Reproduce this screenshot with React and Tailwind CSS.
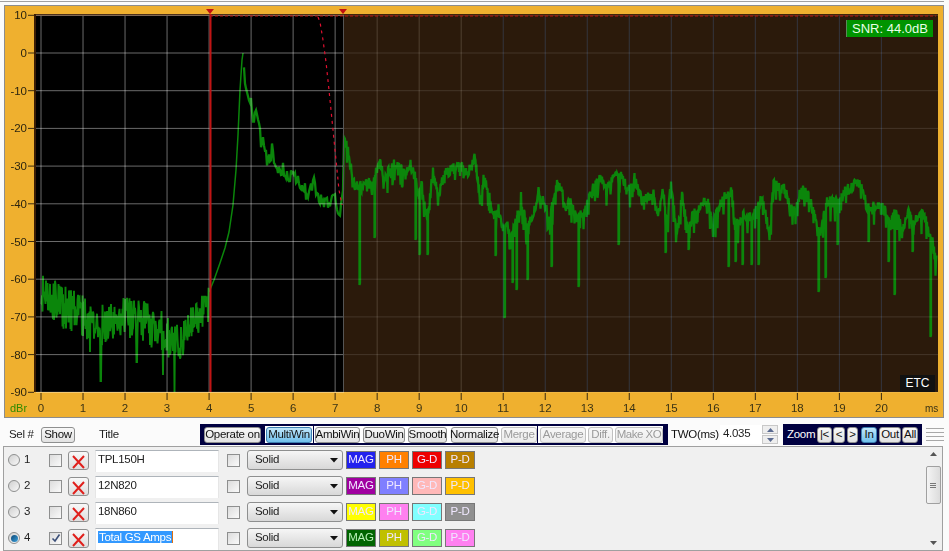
import React from 'react';

const xOf = (ms) => 41 + 42.02 * ms;
const yOf = (db) => 53 + (-db * 37.7) / 10;
const rnd = (i) => {
  const v = Math.sin(i * 12.9898 + 4.1) * 43758.5453;
  return v - Math.floor(v);
};
const lerp = (pts, x) => {
  for (let i = 1; i < pts.length; i++) {
    if (x <= pts[i][0]) {
      const [x0, y0] = pts[i - 1];
      const [x1, y1] = pts[i];
      return y0 + ((y1 - y0) * (x - x0)) / (x1 - x0);
    }
  }
  return pts[pts.length - 1][1];
};

// hand read off the reference
const floorPts = [[41,296],[60,305],[80,316],[100,325],[120,318],[140,320],[160,332],[180,342],[195,325],[209,306]];
const rise = [[209,292],[214,280],[220,263],[225,248],[229,232],[233,205],[236,170],[238,135],[240,90],[242,60],[243,53]];
const decay = [[243,53],[245,82],[248,96],[251,104],[254,125],[257,108],[261,140],[265,150],[268,165],[272,150],[277,172],[283,168],[288,178],[294,170],[300,186],[308,194],[314,185],[320,198],[328,204],[335,200],[340,210],[343,183],[344,137]];
const tail = [[344,137],[347,147],[350,163],[355,187],[362,187],[367,180],[372,190],[375,175],[380,165],[385,178],[395,163],[405,175],[410,162],[415,177],[418,197],[422,185],[427,220],[433,173],[438,197],[442,183],[445,172],[462,165],[468,173],[475,158],[478,183],[480,203],[484,177],[490,200],[495,217],[498,207],[503,232],[508,227],[512,237],[521,198],[527,227],[533,217],[538,192],[543,202],[550,217],[557,185],[562,190],[565,207],[570,200],[578,220],[587,207],[592,188],[600,177],[605,190],[617,175],[623,178],[628,193],[635,177],[642,203],[653,193],[658,217],[663,188],[667,227],[671,183],[677,237],[682,197],[688,233],[692,217],[708,200],[712,227],[723,198],[732,190],[735,227],[745,215],[753,217],[762,198],[770,237],[773,183],[785,190],[793,213],[802,188],[808,193],[813,213],[820,233],[827,202],[837,203],[847,190],[860,182],[867,207],[880,203],[890,220],[897,212],[902,233],[908,207],[913,223],[923,213],[932,240],[935,257]];
const spikes = {359:285,374:238,415:240,419:255,427:255,495:256,504:318,512:283,516:290,527:280,551:267,578:287,618:245,665:253,688:250,728:267,735:262,742:265,751:265,758:265,818:292,825:278,837:245,868:242,888:262,894:295,912:252,930:337};
const floorSpikes = {101:381,163:375,168:385,175:392,90:352,137:362,150:355};

const toPoints = (pts) => pts.map(([x, y]) => x.toFixed(1) + ',' + Math.min(y, 392).toFixed(1)).join(' ');

const buildFloor = () => {
  const out = [];
  for (let x = 41; x < 209; x += 0.5) {
    const key = Math.round(x);
    const y = floorSpikes[key] && rnd(x) > 0.5 ? floorSpikes[key] : lerp(floorPts, x) + (rnd(x * 3) - 0.5) * 44;
    out.push([x, y]);
  }
  return out;
};

const buildTail = () => {
  const out = [];
  for (let x = 244; x <= 343; x += 1) {
    out.push([x, lerp(decay, x) + (rnd(x) - 0.5) * (x > 250 ? 16 : 4)]);
  }
  out.push([344, 137]);
  for (let x = 345; x <= 936; x += 1) {
    for (const dx of [0, 0.5]) {
      let base = lerp(tail, x + dx) + (rnd(x + dx + 0.5) - 0.5) * 12;
      if (rnd((x + dx) * 1.7) > 0.88) base += 14;
      out.push([x + dx, base]);
    }
    if (spikes[x]) {
      out.push([x + 0.5, spikes[x]]);
      out.push([x + 1, spikes[x] - 2]);
      out.push([x + 1, lerp(tail, x + 1)]);
    }
  }
  return out;
};

const floorLine = toPoints(buildFloor());
const riseLine = toPoints(rise);
const tailLine = toPoints(buildTail());
const dbTicks = [10, 0, -10, -20, -30, -40, -50, -60, -70, -80, -90];
const msTicks = Array.from({ length: 21 }, (_, i) => i);

const gridColor = (m) => {
  if (m < 8) return '#6a6a6a';
  if (m < 11) return '#2c2a26';
  return '#0a1e35';
};

const Plot = () => (
  <svg width="938" height="411" viewBox="5 6 938 411" className="block">
    <rect x="34" y="15" width="904" height="377" fill="#000" />
    <rect x="344" y="16" width="594" height="376" fill="#2b1a0b" />
    <rect x="34" y="14" width="904" height="2" fill="#3d1e05" />
    <rect x="34" y="14" width="2" height="378" fill="#3d1e05" />
    <polyline points={floorLine} fill="none" stroke="#0b860b" strokeWidth="1.9" />
    <polyline points={riseLine} fill="none" stroke="#0b860b" strokeWidth="1.5" />
    <polyline points={tailLine} fill="none" stroke="#0b860b" strokeWidth="2.3" />
    {msTicks.map((m) => {
      const x = xOf(m);
      return (
        <g key={m}>
          <line x1={x} y1="16" x2={x} y2="392" stroke={gridColor(m)} strokeWidth="1" className="mix-blend-screen" />
          <line x1={x} y1="393" x2={x} y2="400" stroke="#3a2a10" />
          <text x={x} y="412" textAnchor="middle" fontSize="11.5" fill="#3b3314" fontFamily="Liberation Sans, sans-serif">{m}</text>
        </g>
      );
    })}
    {dbTicks.map((d) => {
      const y = yOf(d);
      return (
        <g key={d}>
          <line x1="36" y1={y} x2="344" y2={y} stroke="#6a6a6a" className="mix-blend-screen" />
          <line x1="344" y1={y} x2="938" y2={y} stroke="#1e1e1e" className="mix-blend-screen" />
          <line x1="28" y1={y} x2="34" y2={y} stroke="#3a2a10" />
          <text x="27" y={y + 4} textAnchor="end" fontSize="11.5" fill="#2c2510" fontFamily="Liberation Sans, sans-serif">{d}</text>
        </g>
      );
    })}
    <text x="10" y="412" fontSize="11" fill="#2f8a00" fontFamily="Liberation Sans, sans-serif">dBr</text>
    <text x="925" y="412" fontSize="10" fill="#3b3314" fontFamily="Liberation Sans, sans-serif">ms</text>

    <line x1="210" y1="16" x2="936" y2="16" stroke="#c01010" strokeDasharray="3 2" />
    <polyline points="318,17 320,22 323,40 326,62 329,90 332,120 335,150 337,170 339,190 342,205" fill="none" stroke="#e01030" strokeDasharray="3 4" strokeWidth="1.2" />
    <line x1="210.5" y1="14" x2="210.5" y2="392" stroke="#c01414" strokeWidth="2" />
    <line x1="343.5" y1="16" x2="343.5" y2="392" stroke="#555" />
    <polygon points="206,9 214,9 210,14" fill="#c01010" />
    <polygon points="339,9 347,9 343,14" fill="#c01010" />
  </svg>
);

const textCls = 'text-[11.5px] tracking-[-0.3px] whitespace-nowrap';

const Btn = ({ children, className, active, off }) => (
  <div
    className={
      'h-[16px] flex items-center justify-center rounded-[3px] border leading-none shrink-0 ' + textCls + ' ' +
      (active
        ? 'border-[#3c7fb1] bg-linear-to-b from-[#bfe6fa] to-[#6fc0ec] '
        : off
          ? 'border-[#c0c0c0] bg-linear-to-b from-[#f8f8f8] to-[#ececec] '
          : 'border-[#8e8f8f] bg-linear-to-b from-[#f8f8f8] to-[#e2e2e2] ') +
      (off ? 'text-[#9a9a9a] ' : 'text-[#111] ') +
      className
    }
  >
    {children}
  </div>
);

const Check = ({ checked }) => (
  <div className="w-[13px] h-[13px] border border-[#8e8f8f] bg-linear-to-br from-[#dcdcdc] to-[#fafafa] flex items-center justify-center shrink-0">
    {checked && (
      <svg width="10" height="10" viewBox="0 0 10 10">
        <path d="M1.5 5.5 L4 8 L8.5 1.5" fill="none" stroke="#3b4f78" strokeWidth="1.6" />
      </svg>
    )}
  </div>
);

const Radio = ({ on }) => (
  <div className="w-[12px] h-[12px] rounded-full border border-[#8e8f8f] bg-linear-to-br from-[#d0d0d0] to-[#f8f8f8] flex items-center justify-center shrink-0">
    {on && <div className="w-[7px] h-[7px] rounded-full bg-linear-to-br from-[#0f4a78] to-[#3aa0dc]" />}
  </div>
);

const Swatch = ({ label, className }) => (
  <div className={'w-[30px] h-[18px] border border-[#777] flex items-center justify-center leading-none shrink-0 ' + textCls + ' ' + className}>
    {label}
  </div>
);

const labels = ['MAG', 'PH', 'G-D', 'P-D'];
const light = 'text-[#f0e8ff] ';

const rows = [
  { n: 1, title: 'TPL150H', sw: [light + 'bg-[#2222ee]', light + 'bg-[#ff8000]', light + 'bg-[#ee0000]', light + 'bg-[#b87f00]'] },
  { n: 2, title: '12N820', sw: [light + 'bg-[#a000a0]', light + 'bg-[#7f7fff]', light + 'bg-[#ffb8b8]', light + 'bg-[#ffc000]'] },
  { n: 3, title: '18N860', sw: [light + 'bg-[#ffff00]', light + 'bg-[#ff80f0]', light + 'bg-[#80ffff]', light + 'bg-[#909090]'] },
  { n: 4, title: 'Total GS Amps', sw: ['text-[#b8f0b8] bg-[#006400]', light + 'bg-[#c0c000]', light + 'bg-[#80ff80]', light + 'bg-[#ff80f0]'], sel: true },
];

const Row = ({ n, title, sw, sel }) => (
  <div className="h-[26px] flex items-center shrink-0">
    <div className="ml-[4px] w-[12px] shrink-0"><Radio on={sel} /></div>
    <span className={'ml-[4px] w-[25px] shrink-0 text-[#222] ' + textCls}>{n}</span>
    <Check checked={sel} />
    <div className="ml-[6px] w-[21px] h-[19px] rounded-[3px] border border-[#8e8f8f] bg-linear-to-b from-[#f8f8f8] to-[#dedede] shrink-0 flex items-center justify-center overflow-hidden">
      <svg width="15" height="15" viewBox="0 0 15 15" className="mt-[3px]">
        <path d="M2 2 L13 14 M13 2 L2 14" stroke="#e0201c" strokeWidth="2" fill="none" />
      </svg>
    </div>
    <div className={'ml-[6px] mt-[2px] w-[124px] h-[22px] bg-white border-t border-t-[#aeb4ba] border-x border-x-[#e6e6e6] pl-[2px] pt-[1px] leading-[14px] text-[#222] shrink-0 ' + textCls}>
      {sel ? <span className="bg-[#3399ff] text-white pl-[1px] pr-[1px] border-r border-r-[#e07010]">{title}</span> : title}
    </div>
    <div className="ml-[8px] shrink-0"><Check /></div>
    <div className={'ml-[7px] w-[96px] h-[20px] rounded-[3px] border border-[#8e8f8f] bg-linear-to-b from-[#f6f6f6] to-[#d8d8d8] flex items-center justify-between pl-[7px] pr-[4px] text-[#222] shrink-0 ' + textCls}>
      Solid
      <svg width="8" height="5" viewBox="0 0 8 5"><path d="M0 0 H8 L4 4.5 Z" fill="#111" /></svg>
    </div>
    <div className="ml-[3px] flex gap-[3px] shrink-0">
      {sw.map((c, i) => (
        <Swatch key={i} label={labels[i]} className={c} />
      ))}
    </div>
  </div>
);

export default function App() {
  return (
    <div className="w-[949px] h-[551px] bg-[#fbfbfb] overflow-hidden flex flex-col relative font-['Liberation_Sans',Arial,sans-serif]">
      <div className="h-[1px] mt-[1px] mr-[5px] bg-[#a0a0a0] shrink-0" />
      <div className="h-[3px] shrink-0" />

      {/* chart */}
      <div className="relative ml-[4px] w-[940px] h-[413px] border border-[#8c8c8c] bg-[#efb02f] shrink-0">
        <Plot />
        <div className="absolute left-[841px] top-[14px] w-[87px] h-[17px] bg-[#009400] border-l border-l-[#5a8a5a] text-[#e8ffe8] text-[13px] leading-[17px] text-center">SNR: 44.0dB</div>
        <div className="absolute left-[895px] top-[369px] w-[35px] h-[17px] bg-[#111] text-white text-[12px] leading-[17px] text-center">ETC</div>
      </div>

      {/* toolbar */}
      <div className="h-[28px] pt-[5px] flex items-center shrink-0 relative">
        <span className={'ml-[9px] w-[32px] shrink-0 text-[#222] ' + textCls}>Sel #</span>
        <Btn className="w-[34px]">Show</Btn>
        <span className={'ml-[24px] w-[101px] shrink-0 text-[#222] ' + textCls}>Title</span>
        <div className="h-[21px] w-[65px] flex items-center bg-[#000040] pl-[4px] shrink-0">
          <Btn className="w-[57px]">Operate on</Btn>
        </div>
        <div className="h-[21px] w-[403px] flex items-center bg-white border-y-2 border-y-[#000040] shrink-0">
          <Btn active className="ml-[1px] w-[46px]">MultiWin</Btn>
          <div className="ml-[1px] w-px h-[21px] bg-[#000040] shrink-0" />
          <Btn className="ml-[1px] w-[45px]">AmbiWin</Btn>
          <Btn className="ml-[3px] w-[42px]">DuoWin</Btn>
          <Btn className="ml-[3px] w-[39px]">Smooth</Btn>
          <Btn className="ml-[4px] w-[47px]">Normalize</Btn>
          <Btn off className="ml-[3px] w-[36px]">Merge</Btn>
          <div className="w-px h-[21px] bg-[#000040] shrink-0" />
          <Btn off className="ml-[2px] w-[46px]">Average</Btn>
          <Btn off className="ml-[2px] w-[25px]">Diff.</Btn>
          <Btn off className="ml-[2px] w-[48px] tracking-[-0.5px]">Make XO</Btn>
          <div className="flex-1 h-[21px] bg-[#000040]" />
        </div>
        <span className={'ml-[3px] w-[49px] shrink-0 text-[#111] ' + textCls}>TWO(ms)</span>
        <div className={'w-[42px] h-[19px] bg-white leading-[17px] pl-[3px] text-[#222] shrink-0 ' + textCls}>4.035</div>
        <div className="w-[16px] h-[19px] flex flex-col gap-px shrink-0">
          <div className="flex-1 border border-[#c8c8c8] bg-[#eeeeee] flex items-center justify-center">
            <svg width="7" height="4" viewBox="0 0 7 4"><path d="M3.5 0 L7 4 H0 Z" fill="#5a6a90" /></svg>
          </div>
          <div className="flex-1 border border-[#c8c8c8] bg-[#eeeeee] flex items-center justify-center">
            <svg width="7" height="4" viewBox="0 0 7 4"><path d="M0 0 H7 L3.5 4 Z" fill="#5a6a90" /></svg>
          </div>
        </div>
        <div className="ml-[5px] w-[139px] h-[21px] bg-[#000040] flex items-center pl-[4px] shrink-0">
          <span className={'w-[30px] shrink-0 text-white ' + textCls}>Zoom</span>
          <Btn className="w-[15px]">|&lt;</Btn>
          <Btn className="ml-[1px] w-[12px]">&lt;</Btn>
          <Btn className="ml-[2px] w-[11px]">&gt;</Btn>
          <Btn active className="ml-[3px] w-[16px]">In</Btn>
          <Btn className="ml-[2px] w-[22px]">Out</Btn>
          <Btn className="ml-[1px] w-[16px]">All</Btn>
        </div>
        <div className="ml-[4px] w-[18px] shrink-0 flex flex-col gap-[3px]">
          <div className="h-px bg-[#a8a8a8]" />
          <div className="h-px bg-[#a8a8a8]" />
          <div className="h-px bg-[#a8a8a8]" />
          <div className="h-px bg-[#a8a8a8]" />
        </div>
      </div>

      {/* trace list */}
      <div className="ml-[3px] w-[940px] h-[105px] border border-[#a0a0a0] bg-[#f0f0f0] flex overflow-hidden shrink-0">
        <div className="flex-1 flex flex-col">
          {rows.map((r) => <Row key={r.n} {...r} />)}
        </div>
        <div className="w-[16px] mr-[1px] flex flex-col items-center justify-between py-[5px]">
          <svg width="7" height="4" viewBox="0 0 7 4"><path d="M3.5 0 L7 4 H0 Z" fill="#555" /></svg>
          <div className="w-[15px] h-[38px] -mt-[27px] rounded-[2px] border border-[#a0a0a0] bg-linear-to-r from-[#f4f4f4] to-[#dcdcdc] flex flex-col items-center justify-center gap-px">
            <div className="w-[6px] h-px bg-[#777]" />
            <div className="w-[6px] h-px bg-[#777]" />
            <div className="w-[6px] h-px bg-[#777]" />
          </div>
          <svg width="7" height="4" viewBox="0 0 7 4"><path d="M0 0 H7 L3.5 4 Z" fill="#555" /></svg>
        </div>
      </div>
    </div>
  );
}
